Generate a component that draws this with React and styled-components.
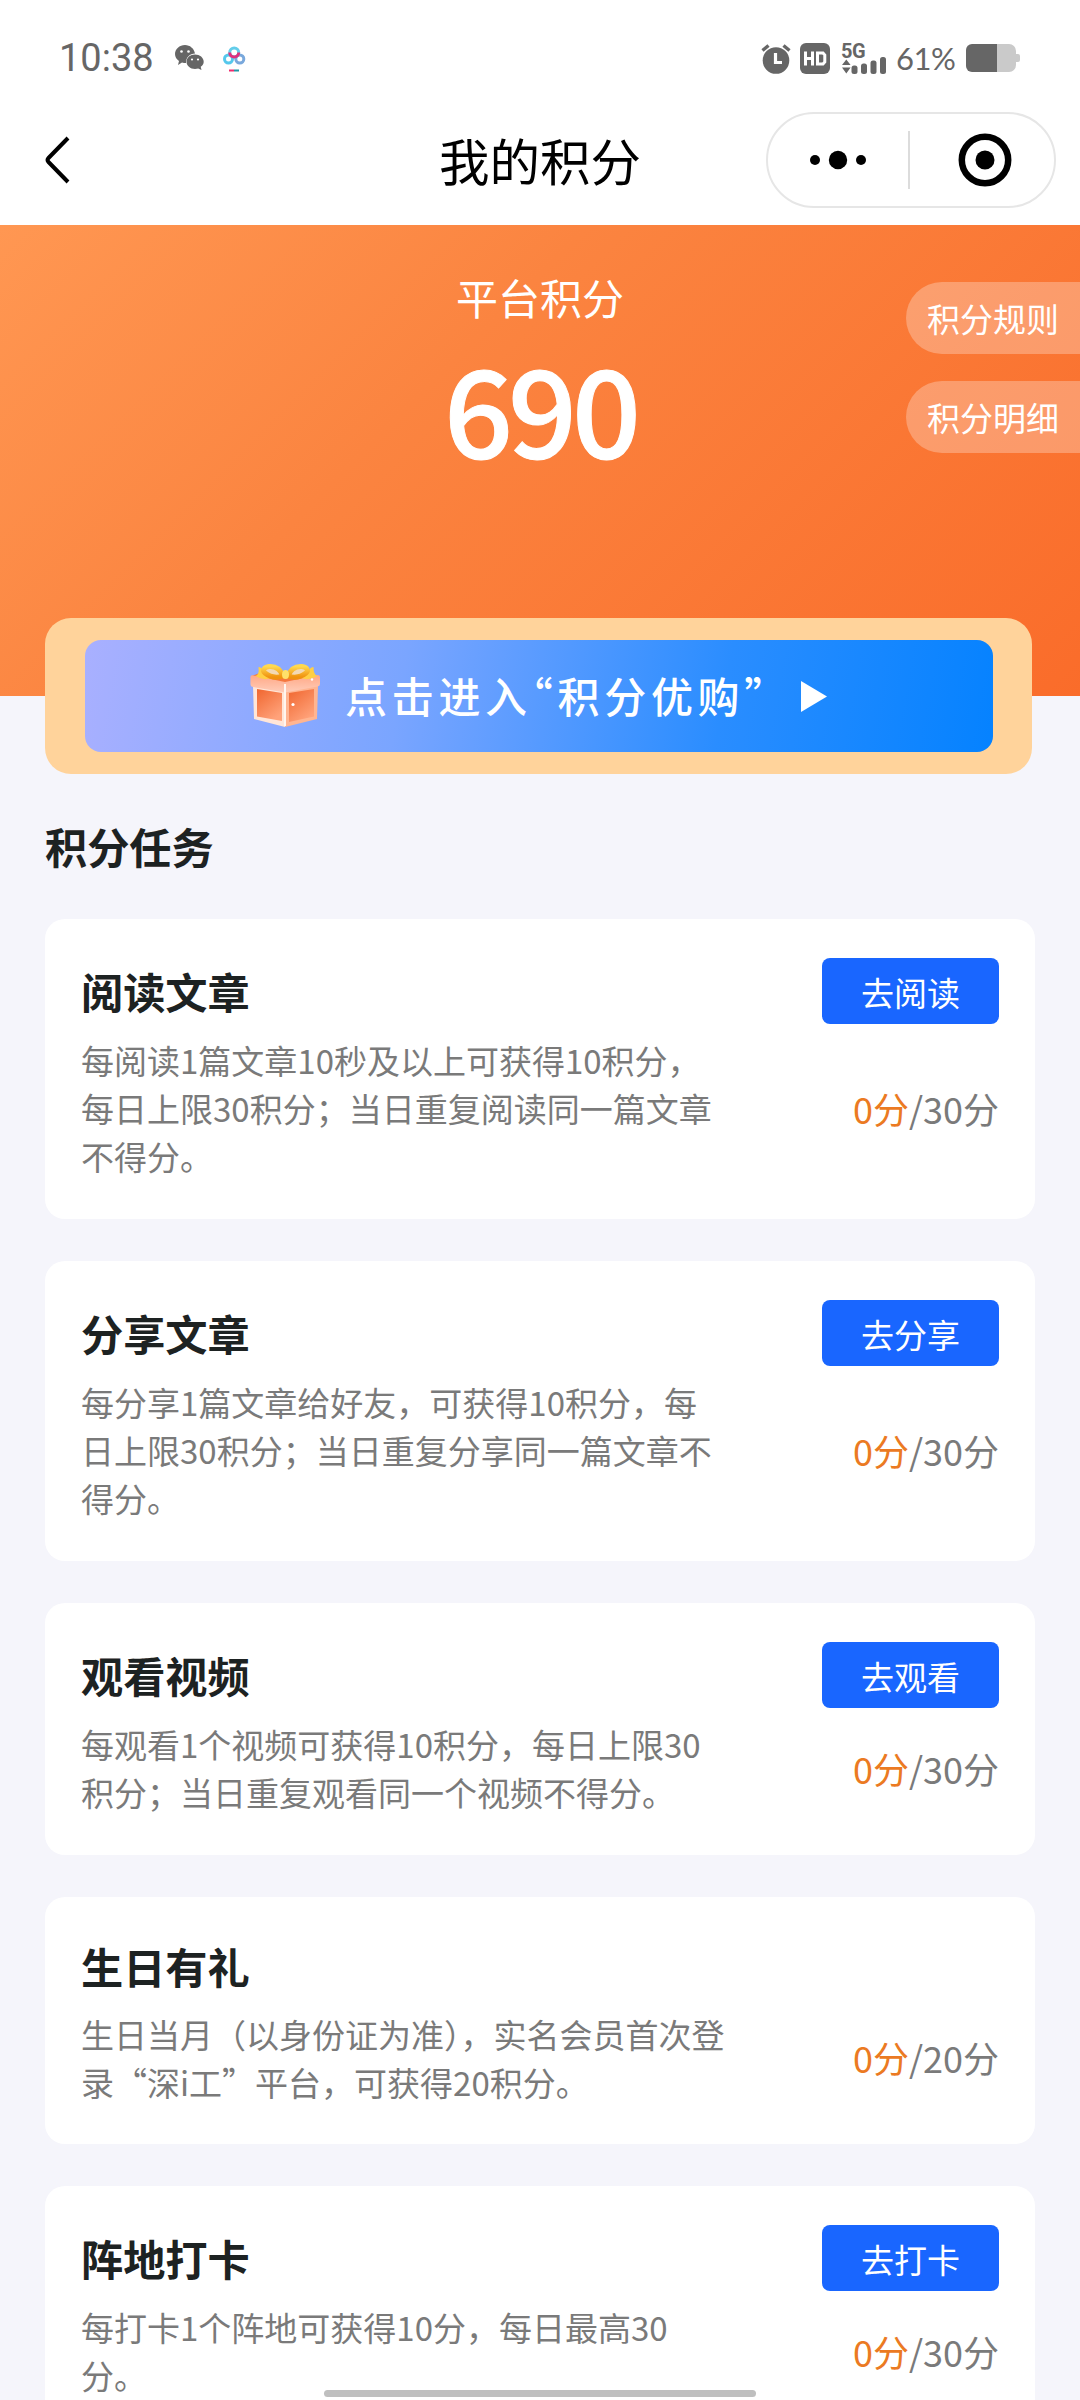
import React from 'react';
import styled, { createGlobalStyle } from 'styled-components';

const GlobalStyle = createGlobalStyle`
  * {
    box-sizing: border-box;
  }
  body {
    background: #f5f5fb;
    font-family: 'Noto Sans CJK SC', sans-serif;
    margin: 0;
  }
`;

const Page = styled.div`
  height: 2400px;
  overflow: hidden;
  position: relative;
  width: 1080px;
`;

const StatusBar = styled.div`
  align-items: center;
  background: #fff;
  color: #666;
  display: flex;
  height: 104px;
  justify-content: space-between;
  padding: 12px 60px 0 59px;
`;

const StatusGroup = styled.div`
  align-items: center;
  display: flex;
`;

const Clock = styled.span`
  font-family: Roboto, sans-serif;
  font-size: 38px;
  line-height: 40px;
  margin-right: 22px;
  width: 94px;
`;

const Battery = styled.span`
  font-family: Lato, sans-serif;
  font-size: 31px;
  letter-spacing: -0.5px;
  line-height: 34px;
  margin: 0 10px 0 9px;
  width: 60px;
`;

const NavBar = styled.div`
  align-items: center;
  background: #fff;
  display: grid;
  grid-template-columns: minmax(0, 1fr) auto minmax(0, 1fr);
  height: 121px;
  padding: 0 24px 9px;

  > svg {
    margin-left: 21px;
  }
`;

const NavTitle = styled.h1`
  font-size: 50.5px;
  font-weight: 400;
  line-height: 72px;
  margin: 0 0 2px;
`;

const Capsule = styled.div`
  align-items: center;
  border: 2px solid #e6e6e6;
  border-radius: 48px;
  display: flex;
  height: 96px;
  justify-self: end;
  width: 290px;
`;

const CapsuleButton = styled.div`
  align-items: center;
  display: flex;
  flex: 1;
  justify-content: center;
  padding-right: 1px;

  & + & {
    border-left: 2px solid #dcdcdc;
    height: 58px;
    padding: 0 0 0 5px;
  }
`;

const Hero = styled.section`
  background: linear-gradient(135deg, #ff9752 0%, #fb8440 38%, #fa6c2a 100%);
  color: #fff;
  height: 471px;
  padding-top: 43px;
  position: relative;
  text-align: center;
`;

const HeroLabel = styled.div`
  font-size: 42px;
  line-height: 58px;
`;

const HeroScore = styled.div`
  font-size: 121px;
  font-weight: 500;
  letter-spacing: -5px;
  line-height: 160px;
  -webkit-text-stroke: 1px #fff;
`;

const HeroLinks = styled.div`
  display: flex;
  flex-direction: column;
  gap: 27px;
  position: absolute;
  right: 0;
  top: 57px;
`;

const HeroLink = styled.a`
  background: rgba(255, 255, 255, 0.28);
  border-radius: 36px 0 0 36px;
  font-size: 33px;
  height: 72px;
  line-height: 72px;
  padding-left: 21px;
  text-align: left;
  width: 174px;
`;

const Banner = styled.div`
  background: #ffd39b;
  border-radius: 26px;
  height: 156px;
  margin: -78px 48px 0 45px;
  padding: 22px 39px 22px 40px;
  position: relative;
`;

const BannerButton = styled.div`
  align-items: center;
  background: linear-gradient(100deg, #a9b0ff 0%, #7aa5ff 35%, #2a8dff 70%, #0582ff 100%);
  border-radius: 16px;
  color: #fff;
  display: flex;
  height: 112px;
  padding-left: 164px;
`;

const BannerText = styled.span`
  font-size: 42px;
  font-weight: 500;
  letter-spacing: 4.7px;
  line-height: 60px;
  margin: 0 31px 2px 22px;
  white-space: nowrap;
`;

const Quote = styled.span`
  font-feature-settings: 'halt';
`;

const SectionTitle = styled.h2`
  color: #1d2222;
  font-size: 42.2px;
  font-weight: 700;
  line-height: 62px;
  margin: 41px 0 42px 45px;
`;

const TaskList = styled.div`
  display: flex;
  flex-direction: column;
  gap: 42px;
  padding: 0 45px;
`;

const TaskCard = styled.article`
  background: #fff;
  border-radius: 20px;
  display: flex;
  flex-shrink: 0;
  height: ${props => props.$height}px;
  justify-content: space-between;
  padding: 0 36px;
`;

const TaskInfo = styled.div`
  padding-top: ${props => (props.$compact ? 38 : 41)}px;
`;

const TaskTitle = styled.h3`
  color: #1d2222;
  font-size: 42.2px;
  font-weight: 700;
  line-height: 62px;
  margin: 0 0 ${props => (props.$compact ? 13 : 14)}px;
`;

const TaskText = styled.p`
  color: #7a7a7a;
  font-size: 33px;
  line-height: 48px;
  margin: 0;
  white-space: pre;
`;

const TaskSide = styled.div`
  align-items: flex-end;
  display: flex;
  flex-direction: column;
  padding-top: ${props => props.$top}px;
`;

const TaskButton = styled.button`
  background: #1966ff;
  border: 0;
  border-radius: 8px;
  color: #fff;
  font-family: inherit;
  font-size: 33px;
  height: 66px;
  line-height: 66px;
  margin-bottom: ${props => props.$gap}px;
  padding: 1px 0 0;
  width: 177px;
`;

const Progress = styled.div`
  color: #7a7a7a;
  font-size: 36px;
  line-height: 52px;
`;

const Earned = styled.span`
  color: #eb7a22;
`;

const HomeIndicator = styled.div`
  background: #bfbfbf;
  border-radius: 4px;
  bottom: 3px;
  height: 7px;
  left: 324px;
  position: absolute;
  width: 432px;
`;

const tasks = [
  {
    title: '阅读文章',
    text: '每阅读1篇文章10秒及以上可获得10积分，\n每日上限30积分；当日重复阅读同一篇文章\n不得分。',
    action: '去阅读',
    total: 30,
    height: 300,
    gap: 58,
  },
  {
    title: '分享文章',
    text: '每分享1篇文章给好友，可获得10积分，每\n日上限30积分；当日重复分享同一篇文章不\n得分。',
    action: '去分享',
    total: 30,
    height: 300,
    gap: 58,
  },
  {
    title: '观看视频',
    text: '每观看1个视频可获得10积分，每日上限30\n积分；当日重复观看同一个视频不得分。',
    action: '去观看',
    total: 30,
    height: 252,
    gap: 34,
  },
  {
    title: '生日有礼',
    text: '生日当月（以身份证为准），实名会员首次登\n录“深i工”平台，可获得20积分。',
    total: 20,
    height: 247,
  },
  {
    title: '阵地打卡',
    text: '每打卡1个阵地可获得10分，每日最高30\n分。',
    action: '去打卡',
    total: 30,
    height: 252,
    gap: 34,
  },
];

const WechatIcon = () => (
  <svg width="29" height="26" viewBox="0 0 29 26" fill="#666">
    <path d="M10 0C4.500 0 0 4 0 9c0 3 1.500 5.300 4 7l-1 4 4-2.500c1.300.4 2.600.5 4 .5-.3-5.500 4-9.500 9-9.500C19 3.500 15 0 10 0z" />
    <path d="M20 9.500c-4.800 0-8.500 3.200-8.500 7.200s3.700 7.200 8.500 7.200c1.200 0 2.300-.2 3.200-.5L26.500 25l-.8-3.200c2-1.300 3-3.200 3-5.100 0-4-3.900-7.200-8.700-7.200z" />
    <g fill="#fff">
      <circle cx="6.500" cy="6.500" r="1.300" />
      <circle cx="13.500" cy="6.500" r="1.300" />
      <circle cx="17" cy="14.500" r="1.100" />
      <circle cx="23" cy="14.500" r="1.100" />
    </g>
  </svg>
);

const CloudMark = styled.svg`
  margin: 2px 0 0 19px;
`;

const CloudIcon = () => (
  <CloudMark width="23" height="26" viewBox="0 0 23 26" fill="none" strokeWidth="3">
    <circle cx="5.500" cy="13" r="4" stroke="#55c8ec" />
    <circle cx="16.800" cy="13" r="4" stroke="#79a8dc" />
    <circle cx="11.200" cy="6.500" r="4.500" stroke="#63cdea" />
    <path d="M6.700 6.500a4.500 4.500 0 0 0 9 0" stroke="#e0307c" />
    <path d="M6 24.500h5" stroke="#ef2a6c" strokeWidth="2" />
    <path d="M11 24.500h5" stroke="#2196a6" strokeWidth="2" />
  </CloudMark>
);

const AlarmIcon = () => (
  <svg width="30" height="31" viewBox="0 0 30 31" fill="none">
    <circle cx="15" cy="17.500" r="13.300" fill="#666" />
    <path d="M1.500 7.500l6-5M28.500 7.500l-6-5" stroke="#666" strokeWidth="3.400" />
    <path d="M14.500 10v9.500h6.500" stroke="#fff" strokeWidth="3.200" />
  </svg>
);

const HdMark = styled.svg`
  margin-left: 9px;
`;

const HdIcon = () => (
  <HdMark width="30" height="31" viewBox="0 0 30 31" fill="none">
    <rect width="30" height="31" rx="6" fill="#666" />
    <path d="M5.500 8.500v14M12.500 8.500v14M5.500 15.500h7M17.500 10h5.500l1.800 2v7L23 21h-5.500z" stroke="#fff" strokeWidth="3" />
  </HdMark>
);

const Signal = styled.div`
  height: 31px;
  margin-left: 12px;
  position: relative;
  width: 45px;

  svg {
    display: block;
  }
`;

const SignalLabel = styled.span`
  font-family: Roboto, sans-serif;
  font-size: 20px;
  font-weight: 700;
  left: -1px;
  letter-spacing: -0.5px;
  line-height: 16px;
  position: absolute;
  top: 0;
`;

const SignalIcon = () => (
  <Signal>
    <SignalLabel>5G</SignalLabel>
    <svg width="45" height="31" viewBox="0 0 45 31" fill="#666">
      <path d="M0 22l4.300-5.500L8.600 22zM0 24.500l4.300 6 4.300-6z" />
      <rect x="9.500" y="22.500" width="6" height="8.500" rx="2.500" />
      <rect x="19" y="20.500" width="6" height="10.500" rx="2.500" />
      <rect x="28.500" y="17.500" width="6" height="13.500" rx="2.500" />
      <rect x="38" y="14" width="6" height="17" rx="2.500" />
    </svg>
  </Signal>
);

const BatteryIcon = () => (
  <svg width="54" height="28" viewBox="0 0 54 28">
    <path d="M31 0h12a7 7 0 0 1 7 7v3h2q2 0 2 2v4q0 2-2 2h-2v3a7 7 0 0 1-7 7H31z" fill="#cacaca" />
    <path d="M31 0H6a6 6 0 0 0-6 6v16a6 6 0 0 0 6 6h25z" fill="#666" />
  </svg>
);

const BackIcon = () => (
  <svg width="26" height="48" viewBox="0 0 26 48" fill="none">
    <path d="M23 2L3.500 22q-2 2 0 4L23 46" stroke="#000" strokeWidth="4" />
  </svg>
);

const MoreIcon = () => (
  <svg width="58" height="20" viewBox="0 0 58 20">
    <circle cx="6" cy="10" r="5" />
    <circle cx="29" cy="10" r="9.200" />
    <circle cx="52" cy="10" r="5" />
  </svg>
);

const TargetIcon = () => (
  <svg width="54" height="54" viewBox="0 0 54 54">
    <circle cx="27" cy="27" r="23.200" fill="none" stroke="#000" strokeWidth="6.500" />
    <circle cx="27" cy="27" r="9.500" />
  </svg>
);

const GiftIcon = () => (
  <svg width="74" height="68" viewBox="0 0 74 68">
    <defs>
      <linearGradient id="giftFront" x1="0" y1="0" x2="0.6" y2="1">
        <stop offset="0" stopColor="#f0662f" />
        <stop offset="1" stopColor="#ffa27a" />
      </linearGradient>
      <linearGradient id="giftLid" x1="0" y1="0" x2="0" y2="1">
        <stop offset="0" stopColor="#ffa886" />
        <stop offset="1" stopColor="#ffcdb9" />
      </linearGradient>
      <linearGradient id="giftBow" x1="0" y1="0" x2="0" y2="1">
        <stop offset="0" stopColor="#ffd950" />
        <stop offset="1" stopColor="#f0920f" />
      </linearGradient>
    </defs>
    <path d="M4 23l32 6v36L5 57z" fill="#ffe6d8" />
    <path d="M36 29l33-6-1 34-32 8z" fill="#ffb591" />
    <path d="M8 27l25 4v28L8 54.500z" fill="url(#giftFront)" />
    <path d="M40 31l25-4v27.500L40 60z" fill="url(#giftFront)" />
    <path d="M3 14l12-5h42l12 5-33 8z" fill="#f5773f" />
    <path d="M1.500 15q0-2 2-1.800L36 20l32.500-7q2.500 0 2.500 2v7q0 2-2.500 2.500L36 30.500 4 25q-2.500-.5-2.500-2.500z" fill="url(#giftLid)" />
    <path d="M36 22v42" stroke="#fff6f0" strokeWidth="2" />
    <path d="M9.500 5q3 0 5 4l8 7q-9 3-16-2 4-1 3-9zM64.500 5q-3 0-5 4l-8 7q9 3 17-2-4-1-4-9z" fill="#ffcf45" />
    <g fill="#f3d9b4" stroke="url(#giftBow)" strokeWidth="5">
      <path d="M34 14C31 6 26 4 20 4.500c-5 .5-7 4-4 6.500 5 4 12 5 18 3z" />
      <path d="M39 14C42 6 47 4 53 4.500c5 .5 7 4 4 6.500-5 4-12 5-18 3z" />
    </g>
    <ellipse cx="36.500" cy="12.500" rx="3.500" ry="4.500" fill="#ffe06a" />
    <circle cx="44" cy="42.500" r="1.600" fill="#fff" />
    <circle cx="63" cy="17.500" r="1.200" fill="#fff" />
  </svg>
);

const PlayIcon = () => (
  <svg width="26" height="31" viewBox="0 0 26 31" fill="#fff">
    <path d="M0 0l26 15.500L0 31z" />
  </svg>
);

const Task = ({ title, text, action, total, height, gap }) => (
  <TaskCard $height={height}>
    <TaskInfo $compact={!action}>
      <TaskTitle $compact={!action}>{title}</TaskTitle>
      <TaskText>{text}</TaskText>
    </TaskInfo>
    <TaskSide $top={action ? 39 : 134}>
      {action && <TaskButton $gap={gap}>{action}</TaskButton>}
      <Progress>
        <Earned>0分</Earned>/{total}分
      </Progress>
    </TaskSide>
  </TaskCard>
);

const App = () => (
  <Page>
    <GlobalStyle />
    <StatusBar>
      <StatusGroup>
        <Clock>10:38</Clock>
        <WechatIcon />
        <CloudIcon />
      </StatusGroup>
      <StatusGroup>
        <AlarmIcon />
        <HdIcon />
        <SignalIcon />
        <Battery>61%</Battery>
        <BatteryIcon />
      </StatusGroup>
    </StatusBar>
    <NavBar>
      <BackIcon />
      <NavTitle>我的积分</NavTitle>
      <Capsule>
        <CapsuleButton>
          <MoreIcon />
        </CapsuleButton>
        <CapsuleButton>
          <TargetIcon />
        </CapsuleButton>
      </Capsule>
    </NavBar>
    <Hero>
      <HeroLabel>平台积分</HeroLabel>
      <HeroScore>690</HeroScore>
      <HeroLinks>
        <HeroLink>积分规则</HeroLink>
        <HeroLink>积分明细</HeroLink>
      </HeroLinks>
    </Hero>
    <Banner>
      <BannerButton>
        <GiftIcon />
        <BannerText>
          点击进入<Quote>“</Quote>积分优购<Quote>”</Quote>
        </BannerText>
        <PlayIcon />
      </BannerButton>
    </Banner>
    <SectionTitle>积分任务</SectionTitle>
    <TaskList>
      {tasks.map(task => (
        <Task key={task.title} {...task} />
      ))}
    </TaskList>
    <HomeIndicator />
  </Page>
);

export default App;
